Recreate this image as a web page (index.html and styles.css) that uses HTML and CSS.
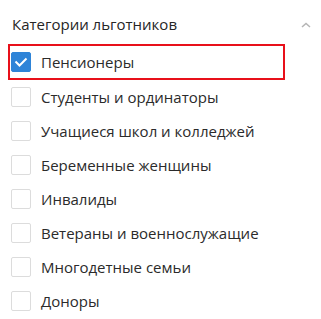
FILE: index.html
```html
<!DOCTYPE html>
<html lang="ru">
<head>
    <meta charset="UTF-8">
    <title>Категории льготников</title>
    <link rel="stylesheet" href="styles.css">
</head>
<body>
    <div class="filter">
        <div class="filter-head">
            <span class="filter-title">Категории льготников</span>
            <svg class="chevron" width="10" height="6" viewBox="0 0 10 6">
                <path d="M1 5 L5 1.5 L9 5" fill="none" stroke="#b5b5b5" stroke-width="1.5"/>
            </svg>
        </div>
        <ul class="options">
            <li class="option option-active">
                <span class="box box-checked">
                    <svg width="14" height="10" viewBox="0 0 14 10">
                        <path d="M1.5 4.5 L5.5 8.5 L12.5 1.5" fill="none" stroke="#fff" stroke-width="2"/>
                    </svg>
                </span>
                Пенсионеры
            </li>
            <li class="option"><span class="box"></span>Студенты и ординаторы</li>
            <li class="option"><span class="box"></span>Учащиеся школ и колледжей</li>
            <li class="option"><span class="box"></span>Беременные женщины</li>
            <li class="option"><span class="box"></span>Инвалиды</li>
            <li class="option"><span class="box"></span>Ветераны и военнослужащие</li>
            <li class="option"><span class="box"></span>Многодетные семьи</li>
            <li class="option"><span class="box"></span>Доноры</li>
        </ul>
    </div>
</body>
</html>
```

FILE: styles.css
```css
body {
    margin: 0;
    background-color: #fff;
    font-family: "Open Sans", "Liberation Sans", sans-serif;
    color: #2b2b2b;
}
.filter {
    width: 321px;
}
.filter-head {
    display: flex;
    justify-content: space-between;
    align-items: center;
    height: 24px;
    padding: 12px 10px 0 12px;
}
.filter-title {
    font-size: 15px;
    font-weight: 500;
    color: #262626;
}
.chevron {
    margin-top: 2px;
}
.options {
    list-style: none;
    margin: 8px 0 0 0;
    padding: 0;
}
.option {
    display: flex;
    align-items: center;
    gap: 10px;
    height: 34px;
    padding-left: 11px;
    font-size: 15px;
    color: #2b2b2b;
}
.option-active {
    width: 272px;
    height: 32px;
    margin-left: 8px;
    padding-left: 1px;
    border: 2px solid #e8101a;
}
.box {
    width: 18px;
    height: 18px;
    border: 1px solid #dcdcdc;
    border-radius: 2px;
    display: flex;
    align-items: center;
    justify-content: center;
    flex: none;
}
.box-checked {
    background-color: #2e84d8;
    border-color: #2e84d8;
}
```
